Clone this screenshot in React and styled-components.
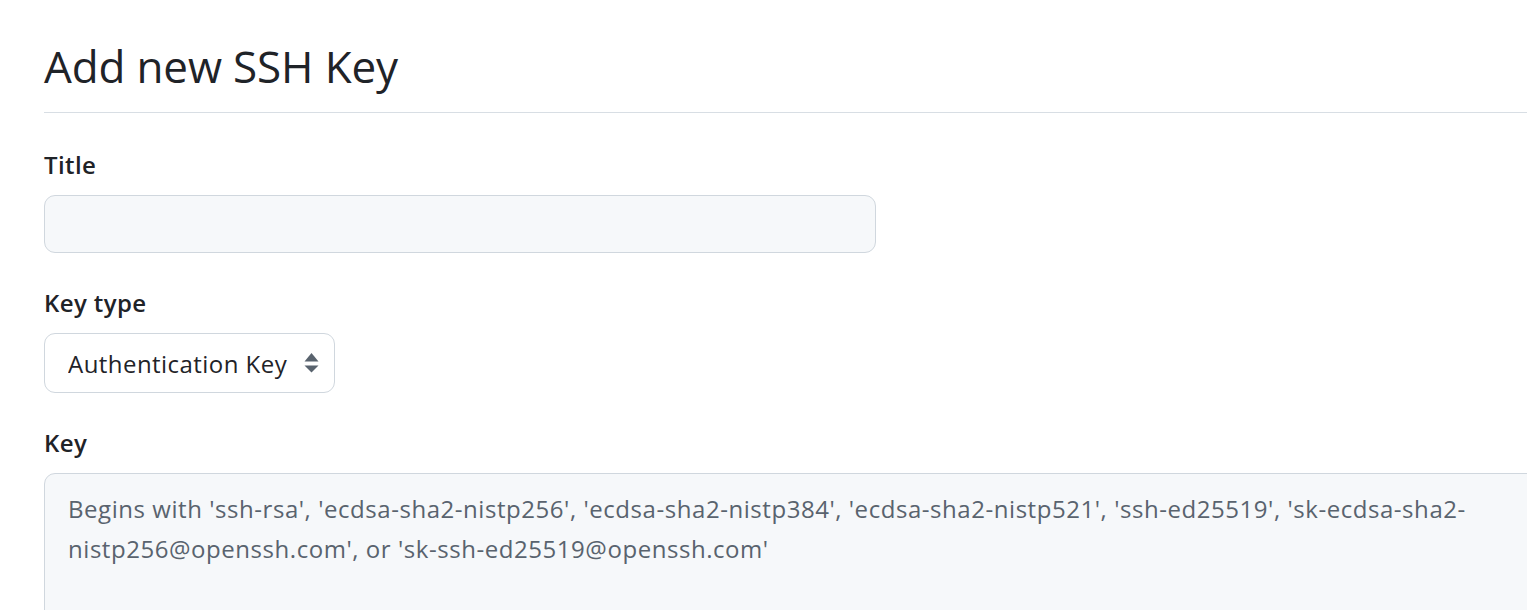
import styled, { createGlobalStyle } from 'styled-components';

const GlobalStyle = createGlobalStyle`
  html, body {
    margin: 0;
    padding: 0;
    background: #ffffff;
    overflow: hidden;
  }
  body {
    font-family: 'Open Sans', 'Noto Sans', sans-serif;
    color: #1f2328;
  }
`;

const KEY_HINT =
  "Begins with 'ssh-rsa', 'ecdsa-sha2-nistp256', 'ecdsa-sha2-nistp384', 'ecdsa-sha2-nistp521', 'ssh-ed25519', 'sk-ecdsa-sha2-\nnistp256@openssh.com', or 'sk-ssh-ed25519@openssh.com'";

function App() {
  return (
    <>
      <GlobalStyle />
      <Page>
        <Subhead>
          <Heading>Add new SSH Key</Heading>
        </Subhead>
        <Form>
          <Group>
            <Label htmlFor="ssh-title">Title</Label>
            <TextInput id="ssh-title" type="text" />
          </Group>
          <Group>
            <Label htmlFor="ssh-type">Key type</Label>
            <SelectWrap>
              <Select id="ssh-type" defaultValue="auth">
                <option value="auth">Authentication Key</option>
                <option value="signing">Signing Key</option>
              </Select>
              <SelectArrow width="15" height="20" viewBox="0 0 15 20" aria-hidden="true">
                <path d="M7.5 0L14.5 8.5H0.5Z" />
                <path d="M0.5 12.5H14.5L7.5 19.5Z" />
              </SelectArrow>
            </SelectWrap>
          </Group>
          <Group>
            <Label htmlFor="ssh-key">Key</Label>
            <KeyArea id="ssh-key" placeholder={KEY_HINT} />
          </Group>
        </Form>
      </Page>
    </>
  );
}

export default App;

const Page = styled.div`
  padding: 0 0 0 44px;
`;

const Subhead = styled.div`
  padding-top: 38px;
  padding-bottom: 18px;
  border-bottom: 1px solid #d8dee4;
`;

const Heading = styled.h2`
  margin: 0;
  font-size: 44px;
  line-height: 56px;
  letter-spacing: -0.15px;
  font-weight: 400;
  color: #1f2328;
`;

const Form = styled.form`
  display: flex;
  flex-direction: column;
  gap: 34px;
  padding-top: 36px;
`;

const Group = styled.div`
  display: flex;
  flex-direction: column;
  align-items: flex-start;
  gap: 14px;
`;

const Label = styled.label`
  font-size: 24px;
  line-height: 32px;
  letter-spacing: 0.4px;
  font-weight: 600;
  color: #1f2328;
`;

const TextInput = styled.input`
  box-sizing: border-box;
  width: 832px;
  height: 58px;
  padding: 0 23px;
  border: 1px solid #d0d7de;
  border-radius: 11px;
  background: #f6f8fa;
  font-family: inherit;
  font-size: 24px;
  outline: none;
`;

const SelectWrap = styled.div`
  position: relative;
  display: inline-flex;
`;

const Select = styled.select`
  box-sizing: border-box;
  width: 291px;
  height: 60px;
  padding: 0 44px 0 23px;
  border: 1px solid #d0d7de;
  border-radius: 11px;
  background: #ffffff;
  color: #1f2328;
  font-family: inherit;
  font-size: 24px;
  letter-spacing: 0.45px;
  appearance: none;
  -webkit-appearance: none;
  outline: none;
`;

const SelectArrow = styled.svg`
  position: absolute;
  top: 20px;
  right: 16px;
  fill: #59636e;
  pointer-events: none;
`;

const KeyArea = styled.textarea`
  box-sizing: border-box;
  width: 1600px;
  height: 300px;
  padding: 15px 23px;
  border: 1px solid #d0d7de;
  border-radius: 11px;
  background: #f6f8fa;
  font-family: inherit;
  font-size: 24px;
  line-height: 40px;
  letter-spacing: 0.55px;
  resize: none;
  outline: none;

  &::placeholder {
    color: #59636e;
    opacity: 1;
  }
`;
